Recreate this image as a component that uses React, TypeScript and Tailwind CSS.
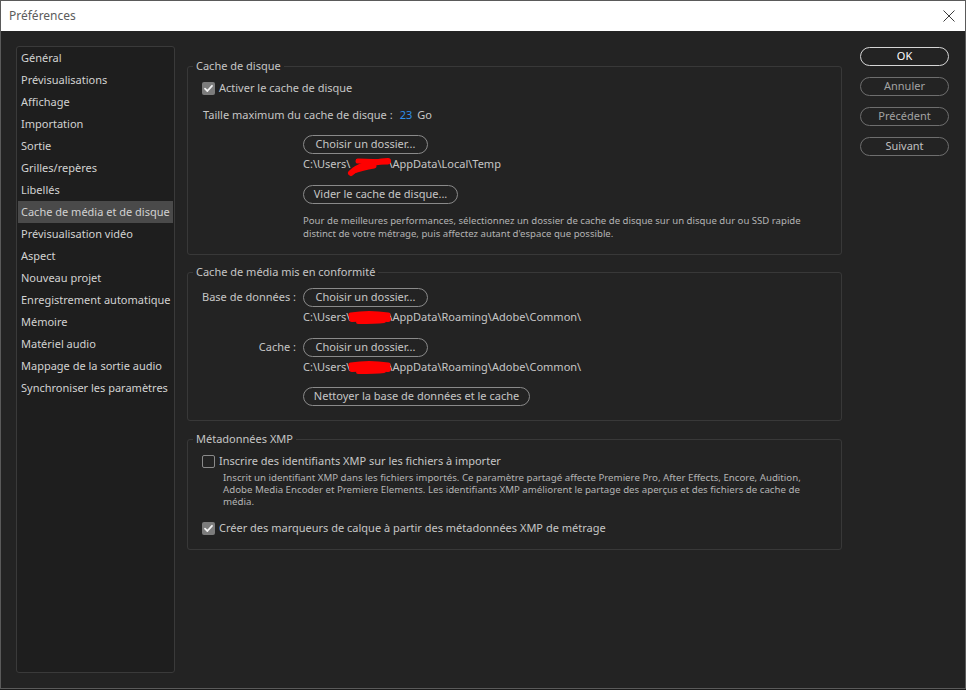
import React from "react";

const items = [
  "Général",
  "Prévisualisations",
  "Affichage",
  "Importation",
  "Sortie",
  "Grilles/repères",
  "Libellés",
  "Cache de média et de disque",
  "Prévisualisation vidéo",
  "Aspect",
  "Nouveau projet",
  "Enregistrement automatique",
  "Mémoire",
  "Matériel audio",
  "Mappage de la sortie audio",
  "Synchroniser les paramètres",
];

function Check({ checked }: { checked: boolean }) {
  if (checked) {
    return (
      <div className="w-[13px] h-[13px] rounded-[2px] bg-[#7c7c7c] flex items-center justify-center shrink-0">
        <svg width="11" height="11" viewBox="0 0 11 11">
          <path d="M2 5.6 L4.4 8 L9 2.8" fill="none" stroke="#f2f2f2" strokeWidth="1.8" strokeLinecap="round" strokeLinejoin="round" />
        </svg>
      </div>
    );
  }
  return <div className="w-[13px] h-[13px] rounded-[2px] border border-[#8a8a8a] shrink-0" />;
}

function Btn({ children, w }: { children: React.ReactNode; w: string }) {
  return (
    <div className={`h-[19px] ${w} rounded-full border border-[#8a8a8a] flex items-center justify-center text-[#c6c6c6] whitespace-nowrap`}>
      {children}
    </div>
  );
}

function Redact({ variant }: { variant: number }) {
  return (
    <span className="relative inline-block w-[38px] h-[16px] align-top">
      <svg className="absolute left-[-2px] top-0" width="44" height="22" viewBox="0 0 44 22" overflow="visible">
        {variant === 0 ? (
          <g fill="none" stroke="#ff0000" strokeLinecap="round" strokeLinejoin="round">
            <path d="M3 17 C 10 10, 22 6, 40 5" strokeWidth="6" />
            <path d="M10 5 L 40 6" strokeWidth="5" />
            <path d="M6 15 C 14 12, 20 11, 26 10" strokeWidth="5" />
          </g>
        ) : (
          <g fill="none" stroke="#ff0000" strokeLinecap="round" strokeLinejoin="round">
            <path d="M3 6 C 14 4, 28 4, 40 6" strokeWidth="5" />
            <path d="M4 10 C 16 9, 28 9, 40 10" strokeWidth="6" />
            <path d="M10 13 C 20 13, 28 13, 36 12" strokeWidth="4" />
          </g>
        )}
      </svg>
    </span>
  );
}

function Path({ rest, variant }: { rest: string; variant: number }) {
  return (
    <div className="h-[16px] leading-[16px] ml-[101px] text-[#c6c6c6] whitespace-nowrap flex">
      <span>C:\Users\</span>
      <Redact variant={variant} />
      <span>\{rest}</span>
    </div>
  );
}

export default function App() {
  return (
    <div className="w-[966px] h-[690px] bg-[#1b1b1b] font-['Noto_Sans','Open_Sans',sans-serif] text-[11px]">
      <div className="w-[966px] h-[689px] border border-[#5a5a5a] flex flex-col bg-[#232323]">
        {/* title bar */}
        <div className="h-[30px] bg-white flex items-center justify-between pl-[8px] pr-[10px] shrink-0">
          <span className="text-[12px] text-[#5c5c5c]">Préférences</span>
          <svg width="12" height="12" viewBox="0 0 12 12">
            <path d="M0.5 0.5 L11.5 11.5 M11.5 0.5 L0.5 11.5" stroke="#3c3c3c" strokeWidth="1" />
          </svg>
        </div>
        {/* body */}
        <div className="flex flex-1">
          {/* sidebar */}
          <div className="pl-[15px] pt-[15px]">
            <div className="w-[159px] h-[627px] border border-[#3a3a3a] rounded-[3px] bg-[#1e1e1e] px-[1px]">
              {items.map((it) => (
                <div
                  key={it}
                  className={`h-[22px] leading-[22px] pl-[3px] text-[#d2d2d2] whitespace-nowrap ${
                    it === "Cache de média et de disque" ? "bg-[#4a4a4a]" : ""
                  }`}
                >
                  {it}
                </div>
              ))}
            </div>
          </div>

          {/* main */}
          <div className="ml-[12px] w-[655px] pt-[27px] text-[#c6c6c6]">
            {/* group 1 */}
            <fieldset className="border border-[#383838] rounded-[3px] pb-[14px]">
              <legend className="ml-[5px] px-[3px] leading-[16px] text-[#c6c6c6]">Cache de disque</legend>
              <div className="pl-[14px]">
                <div className="mt-[6px] h-[16px] flex items-center gap-[4px]">
                  <Check checked />
                  <span>Activer le cache de disque</span>
                </div>
                <div className="mt-[11px] h-[16px] leading-[16px] ml-[1px] flex whitespace-nowrap">
                  <span>Taille maximum du cache de disque :</span>
                  <span className="ml-[7px] text-[#2f8fea]">23</span>
                  <span className="ml-[5px]">Go</span>
                </div>
                <div className="mt-[12px] ml-[101px]">
                  <Btn w="w-[125px]">Choisir un dossier...</Btn>
                </div>
                <div className="mt-[2px]">
                  <Path rest="AppData\Local\Temp" variant={0} />
                </div>
                <div className="mt-[13px] ml-[101px]">
                  <Btn w="w-[155px]">Vider le cache de disque...</Btn>
                </div>
                <div className="mt-[10px] ml-[101px] text-[9.6px] leading-[13px] text-[#b4b4b4] whitespace-nowrap">
                  Pour de meilleures performances, sélectionnez un dossier de cache de disque sur un disque dur ou SSD rapide
                  <br />
                  distinct de votre métrage, puis affectez autant d'espace que possible.
                </div>
              </div>
            </fieldset>

            {/* group 2 */}
            <fieldset className="mt-[9px] border border-[#383838] rounded-[3px] pb-[14px]">
              <legend className="ml-[5px] px-[3px] leading-[16px] text-[#c6c6c6]">Cache de média mis en conformité</legend>
              <div className="pl-[14px]">
                <div className="mt-[8px] flex items-center">
                  <div className="w-[96px] pr-[2px] text-right whitespace-nowrap">Base de données :</div>
                  <div className="ml-[5px]">
                    <Btn w="w-[125px]">Choisir un dossier...</Btn>
                  </div>
                </div>
                <div className="mt-[2px]">
                  <Path rest="AppData\Roaming\Adobe\Common\" variant={1} />
                </div>
                <div className="mt-[13px] flex items-center">
                  <div className="w-[96px] pr-[2px] text-right whitespace-nowrap">Cache :</div>
                  <div className="ml-[5px]">
                    <Btn w="w-[125px]">Choisir un dossier...</Btn>
                  </div>
                </div>
                <div className="mt-[2px]">
                  <Path rest="AppData\Roaming\Adobe\Common\" variant={1} />
                </div>
                <div className="mt-[12px] ml-[101px]">
                  <Btn w="w-[227px]">Nettoyer la base de données et le cache</Btn>
                </div>
              </div>
            </fieldset>

            {/* group 3 */}
            <fieldset className="mt-[10px] border border-[#383838] rounded-[3px] pb-[13px]">
              <legend className="ml-[5px] px-[3px] leading-[16px] text-[#c6c6c6]">Métadonnées XMP</legend>
              <div className="pl-[14px]">
                <div className="mt-[6px] h-[16px] flex items-center gap-[4px]">
                  <Check checked={false} />
                  <span>Inscrire des identifiants XMP sur les fichiers à importer</span>
                </div>
                <div className="mt-[3px] ml-[21px] text-[9.7px] leading-[12px] text-[#b4b4b4] whitespace-nowrap">
                  Inscrit un identifiant XMP dans les fichiers importés. Ce paramètre partagé affecte Premiere Pro, After Effects, Encore, Audition,
                  <br />
                  Adobe Media Encoder et Premiere Elements. Les identifiants XMP améliorent le partage des aperçus et des fichiers de cache de
                  <br />
                  média.
                </div>
                <div className="mt-[12px] h-[16px] flex items-center gap-[4px]">
                  <Check checked />
                  <span>Créer des marqueurs de calque à partir des métadonnées XMP de métrage</span>
                </div>
              </div>
            </fieldset>
          </div>

          {/* right buttons */}
          <div className="ml-[18px] pt-[16px] flex flex-col gap-[11px]">
            <div className="w-[89px] h-[19px] rounded-full border border-[#d6d6d6] flex items-center justify-center text-white">OK</div>
            <div className="w-[89px] h-[19px] rounded-full border border-[#6e6e6e] flex items-center justify-center text-[#a2a2a2]">Annuler</div>
            <div className="w-[89px] h-[19px] rounded-full border border-[#6e6e6e] flex items-center justify-center text-[#a2a2a2]">Précédent</div>
            <div className="w-[89px] h-[19px] rounded-full border border-[#6e6e6e] flex items-center justify-center text-[#c0c0c0]">Suivant</div>
          </div>
        </div>
      </div>
    </div>
  );
}
